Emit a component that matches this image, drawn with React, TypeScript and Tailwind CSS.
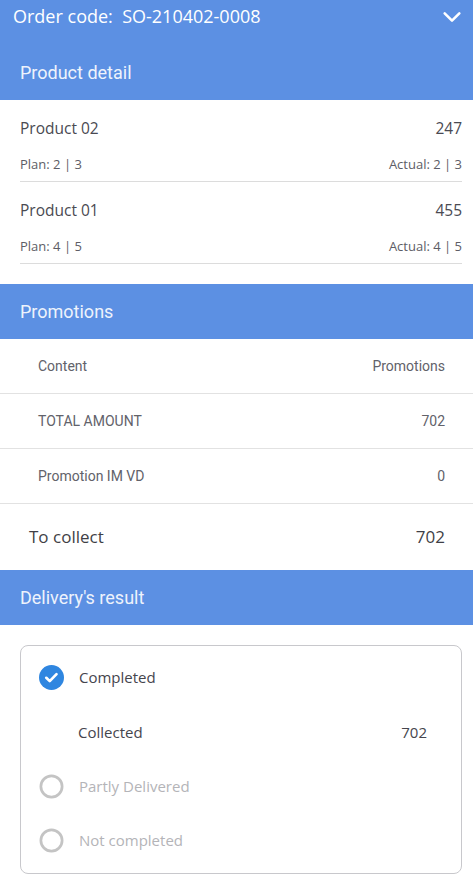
import React from 'react';

const body = "font-['Open_Sans','Lato',sans-serif]";
const roboto = "font-['Roboto','Liberation_Sans',sans-serif]";

const SectionHeader: React.FC<{ title: string }> = ({ title }) => (
  <div className={`h-[55px] bg-[#5c90e3] flex items-center px-5 text-[18px] text-[#eef3fc] ${roboto}`}>{title}</div>
);

const products = [
  { name: 'Product 02', qty: 247, plan: '2 | 3', actual: '2 | 3' },
  { name: 'Product 01', qty: 455, plan: '4 | 5', actual: '4 | 5' },
];

const promos = [
  { label: 'Content', value: 'Promotions' },
  { label: 'TOTAL AMOUNT', value: '702' },
  { label: 'Promotion IM VD', value: '0' },
];

const Radio: React.FC<{ checked?: boolean }> = ({ checked }) =>
  checked ? (
    <svg width="25" height="25" viewBox="0 0 24 24">
      <circle cx="12" cy="12" r="12" fill="#2f86e0" />
      <path d="M7 12.3l3.3 3.2 6.5-6.7" fill="none" stroke="#fff" strokeWidth="2.6" strokeLinecap="round" strokeLinejoin="round" />
    </svg>
  ) : (
    <svg width="25" height="25" viewBox="0 0 24 24">
      <circle cx="12" cy="12" r="10.2" fill="none" stroke="#c4c4c4" strokeWidth="2.6" />
    </svg>
  );

export default function App() {
  return (
    <div className="w-[473px] h-[883px] bg-white overflow-hidden">
      <div className={`h-[45px] bg-[#5c90e3] flex items-start justify-between pl-[13px] pr-[10px] pt-[3px] text-white text-[18px] ${body}`}>
        <span className="whitespace-pre">Order code:  SO-210402-0008</span>
        <svg width="22" height="22" viewBox="0 0 24 24" className="mt-[3px]">
          <path d="M4 8l8 8 8-8" fill="none" stroke="#fff" strokeWidth="2.8" strokeLinecap="round" strokeLinejoin="round" />
        </svg>
      </div>

      <SectionHeader title="Product detail" />
      <div className={`pl-5 pr-[11px] pb-[20px] ${body}`}>
        {products.map((p) => (
          <div key={p.name} className="pt-[9px] border-b border-[#dcdcdc]">
            <div className="flex justify-between items-center h-[40px] text-[15.5px] text-[#4a4a52]">
              <span>{p.name}</span>
              <span>{p.qty}</span>
            </div>
            <div className="flex justify-between items-center h-[32px] text-[13px] text-[#5d5d66]">
              <span>Plan: {p.plan}</span>
              <span>Actual: {p.actual}</span>
            </div>
          </div>
        ))}
      </div>

      <SectionHeader title="Promotions" />
      <div className={roboto}>
        {promos.map((r) => (
          <div key={r.label} className="h-[55px] flex justify-between items-center pl-[38px] pr-[28px] border-b border-[#e2e2e2] text-[14px] text-[#62626a]">
            <span>{r.label}</span>
            <span>{r.value}</span>
          </div>
        ))}
        <div className={`h-[66px] flex justify-between items-center pl-[29px] pr-[28px] text-[17px] text-[#3f3f46] ${body}`}>
          <span>To collect</span>
          <span>702</span>
        </div>
      </div>

      <SectionHeader title="Delivery's result" />
      <div className={`pl-5 pr-[11px] pt-[20px] ${body}`}>
        <div className="border border-[#c8c8cc] rounded-[8px] h-[229px] pl-[18px] pr-[34px] pt-[19px] text-[15px]">
          <div className="flex items-center gap-[15px] h-[25px] text-[#45454d]">
            <Radio checked />
            <span>Completed</span>
          </div>
          <div className="flex justify-between items-center h-[30px] mt-[27px] pl-[39px] text-[#45454d]">
            <span>Collected</span>
            <span>702</span>
          </div>
          <div className="flex items-center gap-[15px] h-[25px] mt-[27px] text-[#b4b4b8]">
            <Radio />
            <span>Partly Delivered</span>
          </div>
          <div className="flex items-center gap-[15px] h-[25px] mt-[29px] text-[#b4b4b8]">
            <Radio />
            <span>Not completed</span>
          </div>
        </div>
      </div>
    </div>
  );
}
